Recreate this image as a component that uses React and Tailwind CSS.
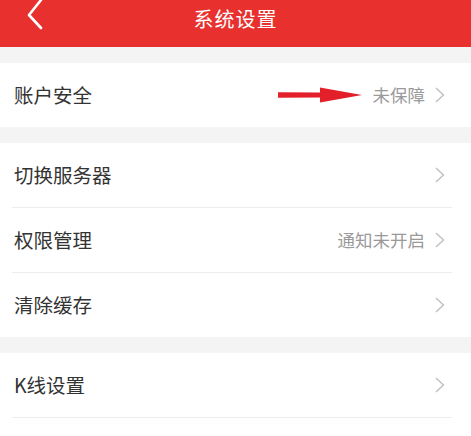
import React from "react";

const Chevron = () => (
  <svg width="12" height="16" viewBox="0 0 12 16" className="shrink-0">
    <path d="M2.5 1.5 L9.5 8 L2.5 14.5" fill="none" stroke="#c4c4c4" strokeWidth="1.7" strokeLinecap="round" strokeLinejoin="round" />
  </svg>
);

const Arrow = () => (
  <svg width="86" height="18" viewBox="0 0 86 18" className="mr-[9px]">
    <path d="M0 6.2 L42 6.4 L42 1.5 L84 9 L42 16.5 L42 11.6 L0 11.8 Z" fill="#e3202a" />
  </svg>
);

const Row = ({ label, value, arrow, divider }) => (
  <div className="bg-white pl-[14px] pr-[25px]">
    <div className="h-[64px] flex items-center">
      <span className="text-[19.5px] text-[#333]">{label}</span>
      <div className="ml-auto flex items-center">
        {arrow && <Arrow />}
        {value && <span className="text-[17.5px] text-[#9a9a9a] mr-[9px]">{value}</span>}
        <Chevron />
      </div>
    </div>
    {divider && <div className="h-px bg-[#ececec] -mr-[6px] -ml-[2px]" />}
  </div>
);

export default function App() {
  return (
    <div className="w-[471px] h-[436px] bg-[#f4f4f4] overflow-hidden" style={{ fontFamily: "'Noto Sans CJK SC', 'Noto Sans', sans-serif" }}>
      <div className="h-[47px] bg-[#e8312f] relative flex items-center justify-center">
        <svg width="20" height="32" viewBox="0 0 20 32" className="absolute left-[25px] -top-[2px]">
          <path d="M16 2 L4 17 L16 30" fill="none" stroke="#fff" strokeWidth="2.6" strokeLinecap="round" strokeLinejoin="round" />
        </svg>
        <span className="text-[20px] text-white -mt-[10px] tracking-[1px]">系统设置</span>
      </div>
      <div className="h-[16px]" />
      <Row label="账户安全" value="未保障" arrow />
      <div className="h-[16px]" />
      <Row label="切换服务器" divider />
      <Row label="权限管理" value="通知未开启" divider />
      <Row label="清除缓存" />
      <div className="h-[16px]" />
      <Row label="K线设置" divider />
      <div className="bg-white h-[20px]" />
    </div>
  );
}
